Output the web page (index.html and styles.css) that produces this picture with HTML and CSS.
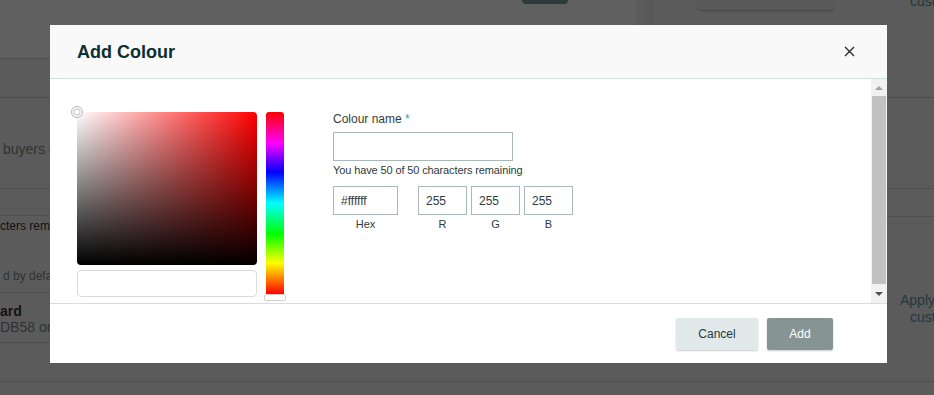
FILE: index.html
```html
<!DOCTYPE html>
<html lang="en">
<head>
    <meta charset="UTF-8">
    <meta name="viewport" content="width=device-width, initial-scale=1.0">
    <title>Add Colour</title>
    <link rel="stylesheet" href="styles.css">
</head>
<body>

<!-- Page behind the dialog -->
<div class="page">
    <div class="main">
        <div class="topbar">
            <span class="dark-btn"></span>
            <span class="top-close">&times;</span>
        </div>
        <div class="row r1"></div>
        <div class="row r2"><p class="muted big">buyers can choose</p></div>
        <div class="row r3"></div>
        <div class="row r4">
            <p class="dark small">cters remaining</p>
            <p class="muted small gap">d by default</p>
        </div>
        <div class="row r5">
            <p class="dark big bold">ard</p>
            <p class="muted big">DB58 or RGB</p>
        </div>
        <div class="row r6"></div>
        <div class="row r7"></div>
    </div>
    <div class="side-shadow">
        <div class="row sh1"></div>
        <div class="row sh2"></div>
        <div class="row sh3"></div>
    </div>
    <aside class="side">
        <div class="side-top">
            <span class="side-box"></span>
            <span class="side-link">customise</span>
        </div>
        <div class="row s2"></div>
        <div class="row s3"></div>
        <div class="row s4">
            <p class="side-text">Apply colour<br><span class="indent">customise</span></p>
        </div>
        <div class="row s5"></div>
    </aside>
</div>

<!-- Dialog -->
<div class="overlay">
    <div class="modal">
        <div class="modal-header">
            <h2>Add Colour</h2>
            <button class="close" aria-label="Close">
                <svg width="11" height="11" viewBox="0 0 11 11">
                    <path d="M1 1 L10 10 M10 1 L1 10" stroke="#2b2b2b" stroke-width="1.4" fill="none"/>
                </svg>
            </button>
        </div>

        <div class="modal-body">
            <div class="modal-content">
                <div class="picker">
                    <div class="sat-col">
                        <div class="sat"><span class="sat-pointer"></span></div>
                        <div class="preview"></div>
                    </div>
                    <div class="hue-col">
                        <div class="hue"></div>
                        <div class="hue-handle"></div>
                    </div>
                </div>

                <div class="fields">
                    <label class="field-label" for="colourName">Colour name <span class="req">*</span></label>
                    <input class="name-input" type="text" id="colourName">
                    <p class="hint">You have 50 of 50 characters remaining</p>
                    <div class="channels">
                        <div class="channel hex">
                            <input type="text" value="#ffffff">
                            <span>Hex</span>
                        </div>
                        <div class="channel">
                            <input type="text" value="255">
                            <span>R</span>
                        </div>
                        <div class="channel">
                            <input type="text" value="255">
                            <span>G</span>
                        </div>
                        <div class="channel">
                            <input type="text" value="255">
                            <span>B</span>
                        </div>
                    </div>
                </div>
            </div>

            <div class="scrollbar">
                <div class="arrow-box"><span class="arrow up"></span></div>
                <div class="thumb"></div>
                <div class="arrow-box"><span class="arrow down"></span></div>
            </div>
        </div>

        <div class="modal-footer">
            <button class="btn btn-cancel">Cancel</button>
            <button class="btn btn-add">Add</button>
        </div>
    </div>
</div>

</body>
</html>
```

FILE: styles.css
```css
* {
    box-sizing: border-box;
}
body {
    margin: 0;
    font-family: "Liberation Sans", Arial, sans-serif;
    background-color: #f0f0f0;
    overflow: hidden;
}
p {
    margin: 0;
}

/* background page */
.page {
    display: flex;
    width: 934px;
    height: 395px;
}
.main {
    width: 636px;
    flex-shrink: 0;
    overflow: hidden;
    white-space: nowrap;
}
.row {
    border-bottom: 1px solid #d0d0d0;
}
.topbar {
    height: 59px;
    background-color: #fcfcfc;
    border-bottom: 1px solid #d0d0d0;
    display: flex;
    align-items: flex-start;
    padding-left: 522px;
}
.dark-btn {
    flex-shrink: 0;
    width: 46px;
    height: 4px;
    background-color: #7d9599;
    border-radius: 0 0 5px 5px;
}
.top-close {
    margin-left: 34px;
    margin-top: -15px;
    font-size: 22px;
    line-height: 20px;
    color: #555;
}
.r1 { height: 39px; }
.r2 { height: 91px; padding-top: 43px; }
.r3 { height: 27px; }
.r4 { height: 77px; padding-top: 3px; }
.r5 { height: 50px; padding-top: 10px; }
.r6 { height: 39px; }
.r7 { height: 20px; border: none; }
.big {
    font-size: 14px;
    line-height: 16px;
}
.small {
    font-size: 12px;
    line-height: 14px;
}
.gap {
    margin-top: 36px;
}
.bold {
    font-weight: bold;
}
.muted {
    color: #7d8585;
    padding-left: 3px;
}
.r5 .muted {
    padding-left: 0;
}
.dark {
    color: #333;
}

.side-shadow {
    width: 18px;
    flex-shrink: 0;
    background: linear-gradient(to right, #f4f4f4, #e6e6e6) no-repeat;
    background-size: 100% 58px;
}
.sh1 { height: 98px; }
.sh2 { height: 91px; }
.sh3 { height: 193px; }
.side {
    flex: 1;
    overflow: hidden;
    white-space: nowrap;
}
.side-top {
    height: 98px;
    border-bottom: 1px solid #d0d0d0;
    display: flex;
    align-items: flex-start;
    padding-left: 44px;
}
.side-box {
    flex-shrink: 0;
    width: 136px;
    height: 10px;
    background-color: #ebebeb;
    box-shadow: 0 1px 2px rgba(0,0,0,0.25);
    border-radius: 0 0 3px 3px;
}
.side-link {
    flex-shrink: 0;
    margin-left: 76px;
    margin-top: -7px;
    font-size: 14px;
    line-height: 16px;
    color: #5b959c;
}
.s2 { height: 91px; }
.s3 { height: 28px; }
.s4 { height: 165px; padding-top: 75px; }
.s5 { height: 20px; border: none; }
.side-text {
    padding-left: 246px;
    font-size: 14px;
    line-height: 17px;
    color: #5b959c;
}
.indent {
    padding-left: 10px;
}

/* dialog */
.overlay {
    position: fixed;
    inset: 0;
    background-color: rgba(0,0,0,0.62);
    padding: 25px 0 0 50px;
}
.modal {
    width: 837px;
    height: 338px;
    background-color: #fff;
    display: flex;
    flex-direction: column;
}
.modal-header {
    height: 54px;
    flex-shrink: 0;
    background-color: #f9f9f9;
    border-bottom: 1px solid #d3dfdf;
    display: flex;
    align-items: center;
    justify-content: space-between;
    padding: 0 32px 0 27px;
}
.modal-header h2 {
    margin: 0;
    font-size: 18px;
    line-height: 18px;
    font-weight: bold;
    color: #0c2f33;
}
.close {
    background: none;
    border: none;
    padding: 0;
    width: 11px;
    height: 11px;
    display: flex;
}

.modal-body {
    height: 224px;
    flex-shrink: 0;
    display: flex;
}
.modal-content {
    flex: 1;
    display: flex;
    padding: 33px 0 0 27px;
}
.picker {
    display: flex;
}
.sat-col {
    width: 180px;
}
.sat {
    position: relative;
    height: 153px;
    border-radius: 4px;
    background:
        linear-gradient(to top, #000, rgba(0,0,0,0)),
        linear-gradient(to right, #fff, #f00);
}
.sat-pointer {
    position: absolute;
    left: -6px;
    top: -6px;
    width: 12px;
    height: 12px;
    border-radius: 50%;
    border: 1.5px solid #b8b8b8;
    background-color: #fff;
    box-shadow: inset 0 0 0 1.5px #fff, inset 0 0 0 2.5px #c4c4c4;
}
.preview {
    margin-top: 5px;
    height: 27px;
    border: 1px solid #dadada;
    border-radius: 4px;
}
.hue-col {
    width: 22px;
    margin-left: 7px;
    display: flex;
    flex-direction: column;
    align-items: center;
}
.hue {
    width: 18px;
    height: 182px;
    border-radius: 3px 3px 0 0;
    background: linear-gradient(to bottom, #f00 0%, #f0f 17%, #00f 33%, #0ff 50%, #0f0 67%, #ff0 83%, #f00 100%);
}
.hue-handle {
    width: 22px;
    height: 7px;
    background-color: #fff;
    border: 1px solid #cfcfcf;
    border-radius: 2px;
}

.fields {
    margin-left: 47px;
    display: flex;
    flex-direction: column;
    align-items: flex-start;
}
.field-label {
    font-size: 12px;
    line-height: 14px;
    color: #333d3e;
}
.req {
    color: #1fa5a8;
}
.name-input {
    margin-top: 6px;
    width: 180px;
    height: 29px;
    border: 1px solid #a9b9ba;
    border-radius: 0;
    outline: none;
}
.hint {
    margin-top: 2px;
    font-size: 11px;
    line-height: 14px;
    letter-spacing: -0.12px;
    color: #2e3a3b;
}
.channels {
    margin-top: 9px;
    display: flex;
    gap: 4px;
}
.channel {
    display: flex;
    flex-direction: column;
    align-items: center;
    width: 49px;
}
.channel.hex {
    width: 65px;
    margin-right: 16px;
}
.channel input {
    width: 100%;
    height: 29px;
    border: 1px solid #a9b9ba;
    border-radius: 0;
    padding: 0 0 0 7px;
    font-family: "Liberation Sans", Arial, sans-serif;
    font-size: 12px;
    color: #2e3a3b;
    outline: none;
}
.channel span {
    margin-top: 2px;
    font-size: 11px;
    line-height: 14px;
    color: #2e3a3b;
}

.scrollbar {
    width: 16px;
    flex-shrink: 0;
    background-color: #f1f1f1;
    display: flex;
    flex-direction: column;
}
.arrow-box {
    height: 17px;
    display: flex;
    align-items: center;
    justify-content: center;
}
.arrow-box:last-child {
    height: 19px;
}
.arrow {
    width: 0;
    height: 0;
    border-left: 4px solid transparent;
    border-right: 4px solid transparent;
}
.arrow.up {
    border-bottom: 4px solid #a3a3a3;
}
.arrow.down {
    border-top: 4px solid #505050;
}
.thumb {
    flex: 1;
    margin: 0 1px 0 1px;
    background-color: #c1c1c1;
}

.modal-footer {
    flex: 1;
    border-top: 1px solid #dcdcdc;
    display: flex;
    justify-content: flex-end;
    align-items: flex-start;
    gap: 9px;
    padding: 14px 54px 0 0;
}
.btn {
    height: 32px;
    border: none;
    border-radius: 2px;
    font-family: "Liberation Sans", Arial, sans-serif;
    font-size: 12px;
    cursor: pointer;
    box-shadow: 0 1px 2px rgba(0,0,0,0.2);
}
.btn-cancel {
    width: 82px;
    background-color: #e1e9ea;
    color: #1f3a3c;
}
.btn-add {
    width: 66px;
    background-color: #879494;
    color: #fff;
}
```
